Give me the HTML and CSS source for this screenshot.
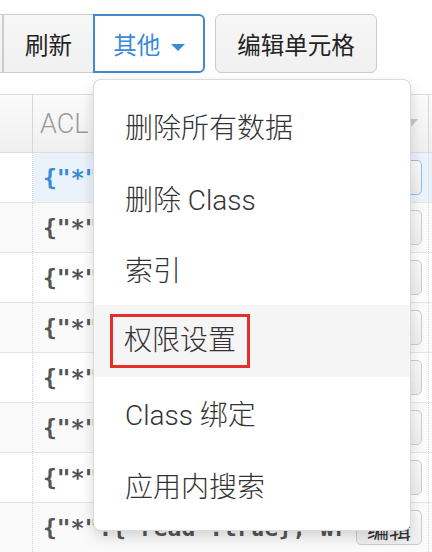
FILE: index.html
```html
<!DOCTYPE html>
<html lang="zh-CN">
<head>
<meta charset="utf-8">
<link rel="stylesheet" href="styles.css">
</head>
<body>
<div class="toolbar">
  <div class="btn-group">
    <button class="btn btn-prev">导出</button>
    <button class="btn btn-mid">刷新</button>
    <div class="dropdown">
      <button class="btn btn-last btn-active">其他 <span class="caret"></span></button>
      <ul class="menu">
        <li class="menu-item">删除所有数据</li>
        <li class="menu-item">删除 Class</li>
        <li class="menu-item">索引</li>
        <li class="menu-item menu-hover"><span class="marked">权限设置</span></li>
        <li class="menu-item">Class 绑定</li>
        <li class="menu-item">应用内搜索</li>
      </ul>
    </div>
  </div>
  <button class="btn btn-solo">编辑单元格</button>
</div>
<div class="table">
  <div class="row head">
    <div class="cell c1"></div>
    <div class="cell c2"><span class="th-label">ACL</span><span class="th-caret"></span></div>
    <div class="cell c3"></div>
  </div>
  <div class="row selected">
    <div class="cell c1"></div>
    <div class="cell c2"><span class="code">{"*":{"read":true},"write":true}}</span><button class="edit">编辑</button></div>
    <div class="cell c3"></div>
  </div>
  <div class="row">
    <div class="cell c1"></div>
    <div class="cell c2"><span class="code">{"*":{"read":true},"write":true}}</span><button class="edit">编辑</button></div>
    <div class="cell c3"></div>
  </div>
  <div class="row">
    <div class="cell c1"></div>
    <div class="cell c2"><span class="code">{"*":{"read":true},"write":true}}</span><button class="edit">编辑</button></div>
    <div class="cell c3"></div>
  </div>
  <div class="row">
    <div class="cell c1"></div>
    <div class="cell c2"><span class="code">{"*":{"read":true},"write":true}}</span><button class="edit">编辑</button></div>
    <div class="cell c3"></div>
  </div>
  <div class="row">
    <div class="cell c1"></div>
    <div class="cell c2"><span class="code">{"*":{"read":true},"write":true}}</span><button class="edit">编辑</button></div>
    <div class="cell c3"></div>
  </div>
  <div class="row">
    <div class="cell c1"></div>
    <div class="cell c2"><span class="code">{"*":{"read":true},"write":true}}</span><button class="edit">编辑</button></div>
    <div class="cell c3"></div>
  </div>
  <div class="row">
    <div class="cell c1"></div>
    <div class="cell c2"><span class="code">{"*":{"read":true},"write":true}}</span><button class="edit">编辑</button></div>
    <div class="cell c3"></div>
  </div>
  <div class="row">
    <div class="cell c1"></div>
    <div class="cell c2"><span class="code">{"*":{"read":true},"write":true}}</span><button class="edit">编辑</button></div>
    <div class="cell c3"></div>
  </div>
</div>
</body>
</html>
```

FILE: styles.css
```css
* { box-sizing: border-box; }
html, body {
  margin: 0;
  padding: 0;
  width: 432px;
  height: 552px;
  overflow: hidden;
  background: #fff;
  font-family: "Liberation Sans", "Noto Sans CJK SC", sans-serif;
  color: #333;
}
.toolbar {
  display: flex;
  align-items: flex-start;
  gap: 10px;
  padding: 14px 0 21px;
  height: 94px;
}
.btn-group {
  display: flex;
  margin-left: -80px;
}
.btn {
  height: 59px;
  margin: 0;
  border: 1px solid #ccc;
  background: linear-gradient(#f7f7f7, #f0f0f0);
  font-family: "Liberation Sans", "Noto Sans CJK SC", sans-serif;
  font-size: 23.5px;
  font-weight: 400;
  color: #222;
  padding: 0;
  cursor: pointer;
}
.btn-prev { width: 83px; border-radius: 0; }
.btn-mid { width: 90px; border-left: 1px solid #ccc; border-right: none; border-radius: 0; }
.dropdown { position: relative; }
.btn-last {
  width: 112px;
  border-radius: 0 6px 6px 0;
}
.btn-active {
  background: #fff;
  border: 2px solid #3f89cc;
  color: #3a8ad6;
}
.caret {
  display: inline-block;
  width: 0;
  height: 0;
  margin-left: 4px;
  vertical-align: middle;
  border-left: 7px solid transparent;
  border-right: 7px solid transparent;
  border-top: 7px solid #3a8ad6;
}
.btn-solo {
  width: 162px;
  border-radius: 6px;
}
.menu {
  position: absolute;
  top: 65px;
  left: 0;
  width: 318px;
  margin: 0;
  padding: 10px 0 9px;
  list-style: none;
  background: #fff;
  border: 1px solid rgba(0,0,0,0.14);
  border-radius: 8px;
  box-shadow: 0 6px 14px rgba(0,0,0,0.15);
  z-index: 10;
}
.menu-item {
  height: 71.8px;
  display: flex;
  align-items: center;
  padding-left: 31px;
  font-family: "Roboto", "Noto Sans CJK SC", sans-serif;
  font-size: 28px;
  font-weight: 300;
  color: #333;
}
.menu-hover { background: #f5f5f5; }
.marked {
  margin-left: -15px;
  padding: 5px 11px;
  border: 3px solid #e4302a;
  line-height: 38px;
}
.table { width: 480px; }
.row {
  display: grid;
  grid-template-columns: 33px 396px 51px;
  height: 50px;
  border-bottom: 1px solid #e6e6e6;
}
.row:nth-child(odd) .c1, .row:nth-child(odd) .c2, .row:nth-child(odd) .c3 { background: #fafafa; }
.cell {
  display: flex;
  align-items: center;
  overflow: hidden;
  border-right: 1px dotted #d4d4d4;
}
.head {
  height: 59px;
  border-top: 1px solid #dcdcdc;
  border-bottom: 1px solid #dcdcdc;
}
.head .cell {
  background: linear-gradient(#fbfbfb, #efefef) !important;
  border-right: 1px solid #d6d6d6;
}
.th-label {
  margin-left: -3px;
  font-family: "Roboto", "Liberation Sans", sans-serif;
  font-size: 27px;
  font-weight: 300;
  color: #9a9a9a;
  flex: 1;
}
.th-caret {
  width: 0;
  height: 0;
  margin-right: 4px;
  border-left: 8px solid transparent;
  border-right: 8px solid transparent;
  border-top: 9px solid #c8c8c8;
}
.c2 {
  padding-left: 10px;
  justify-content: space-between;
  padding-right: 6px;
}
.code {
  font-family: "DejaVu Sans Mono", monospace;
  font-size: 23px;
  font-weight: 700;
  color: #555;
  white-space: nowrap;
  overflow: hidden;
  flex: 1;
  margin-right: 10px;
}
.edit {
  flex: none;
  width: 66px;
  height: 35px;
  padding: 0;
  border: 1px solid #ccc;
  border-radius: 5px;
  background: linear-gradient(#fafafa, #efefef);
  font-family: "Noto Sans CJK SC", sans-serif;
  font-size: 22px;
  color: #333;
}
.selected .c2, .selected .c3 { background: #eaf3fc !important; }
.selected .c1 { background: #fff !important; }
.selected .code { color: #3a8ad6; }
.selected .edit { border-color: #93bde6; }
```
